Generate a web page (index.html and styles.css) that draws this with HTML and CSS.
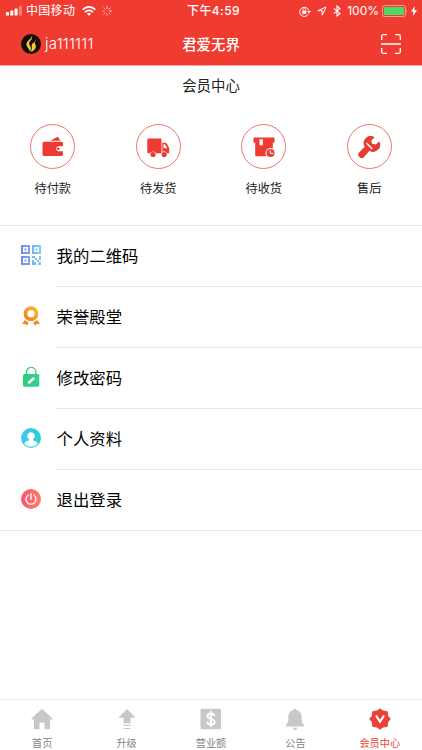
FILE: index.html
```
<!DOCTYPE html>
<html lang="zh-CN">

<head>
    <meta charset="UTF-8">
    <title>会员中心</title>
    <link rel="stylesheet" href="styles.css">
</head>

<body>
    <div class="top">
        <div class="status">
            <div class="status-left">
                <svg class="signal" width="17" height="10" viewBox="0 0 17 10" fill="#fff">
                    <rect x="0" y="6" width="3" height="3.5" rx=".6" />
                    <rect x="4.3" y="4.5" width="3" height="5" rx=".6" />
                    <rect x="8.6" y="2.5" width="3" height="7" rx=".6" />
                    <rect x="12.9" y="0" width="3" height="9.5" rx=".6" opacity=".35" />
                </svg>
                <span class="carrier">中国移动</span>
                <svg class="wifi" width="14" height="10" viewBox="0 0 14 10" fill="none" stroke="#fff" stroke-width="1.8">
                    <path d="M.7 3.6Q7-2 13.300 3.600M3 6.100Q7 2.700 11 6.100" />
                    <path d="M7 9.800L4.900 7.700Q7 6 9.100 7.700Z" fill="#fff" stroke="none" />
                </svg>
                <svg class="loading" width="10" height="10" viewBox="0 0 10 10" stroke="#fff" stroke-width=".9" stroke-linecap="round">
                    <path d="M5 .5v2M8.200 1.800L6.800 3.200M9.500 5h-2" opacity=".9" />
                    <path d="M8.200 8.200L6.800 6.800M5 9.500v-2M1.800 8.200l1.400-1.400M.5 5h2M1.800 1.800l1.400 1.400" opacity=".6" />
                </svg>
            </div>
            <div class="time">下午4:59</div>
            <div class="status-right">
                <svg width="12" height="11" viewBox="0 0 12 11" fill="none" stroke="#fff">
                    <path d="M9.300 8.300A4.600 4.600 0 1 1 9.800 4.500" />
                    <path d="M8 5h4L10 7.600Z" fill="#fff" stroke="none" />
                    <rect x="3.300" y="4.700" width="4" height="3.200" fill="#fff" stroke="none" />
                    <path d="M4 5V3.700a1.300 1.300 0 0 1 2.600 0V5" stroke-width=".8" />
                </svg>
                <svg class="locate" width="10" height="10" viewBox="0 0 10 10" fill="none" stroke="#fff">
                    <path d="M9 1L.8 4.700h4.400V9.200Z" stroke-linejoin="round" />
                </svg>
                <svg class="bluetooth" width="8" height="12" viewBox="0 0 8 12" fill="none" stroke="#fff" stroke-width="1.100">
                    <path d="M.8 3.300L7 8.500 4 11V1l3 2.500L.8 8.700" />
                </svg>
                <span class="percent">100%</span>
                <svg class="battery" width="26" height="12" viewBox="0 0 26 12">
                    <rect x=".5" y=".5" width="23" height="11" rx="2" fill="none" stroke="#fff" stroke-opacity=".5" />
                    <rect x="2" y="2" width="20" height="8" rx=".8" fill="#4cd964" />
                    <path d="M24.600 4q1.200 2 0 4Z" fill="#fff" opacity=".6" />
                </svg>
                <svg class="bolt" width="6" height="10" viewBox="0 0 6 10" fill="#fff">
                    <path d="M3.900 0L0 5.600h2.500L1.900 10 6 4.200H3.300Z" />
                </svg>
            </div>
        </div>
        <div class="header">
            <div class="user">
                <svg width="20" height="20" viewBox="0 0 20 20">
                    <circle cx="10" cy="10" r="10" fill="#150d08" />
                    <path d="M10.700 1.500C11.500 5 5.200 6.500 5.400 10.600c.1 2.800 3 3.700 3.200 7C12.500 13 7.200 11.800 8.300 8.700 9.300 6.200 12.200 4.800 10.700 1.500Z" fill="#f5c839" />
                    <path d="M14.700 5.500c.3 2.900-4.600 3.300-4 6.700.4 2-.2 4-1.300 5.900 3.400-1.200 5.500-3.200 5.500-5.700 0-2-1.500-2.500-1.200-3.800.3-1 1.800-1.600 1-3.100Z" fill="#f5c839" />
                </svg>
                <span>ja111111</span>
            </div>
            <div class="shop">君爱无界</div>
            <svg class="scan" width="20" height="20" viewBox="0 0 20 20" fill="none" stroke="#fff" stroke-width="1.300">
                <path d="M.7 6V2.200Q.7.7 2.200.7H6M14 .7h3.800q1.500 0 1.500 1.500V6M.7 14v3.800q0 1.500 1.500 1.500H6M14 19.300h3.800q1.500 0 1.500-1.500V14M0 10h20" />
            </svg>
        </div>
    </div>

    <h1 class="title">会员中心</h1>
    <div class="orders">
        <div class="order">
            <div class="circle">
                <svg width="22" height="22" viewBox="0 0 22 22" fill="#ee3a30">
                    <path d="M8.300 4.800L14.600 1.200q1.300-.6 2.300.7L18.300 4.800Z" />
                    <path d="M2 5.700h17.500q1.500 0 1.500 1.500v3h-4.200a2.500 2.500 0 0 0 0 5H21v3.100q0 1.600-1.600 1.600H2.100Q.5 19.900.5 18.300V7.200q0-1.500 1.500-1.500Z" />
                    <circle cx="16.300" cy="12.700" r="1.300" />
                </svg>
            </div>
            <span>待付款</span>
        </div>
        <div class="order">
            <div class="circle">
                <svg width="24" height="22" viewBox="0 0 24 22" fill="#ee3a30">
                    <path d="M2.500 2.500h11.800q1.200 0 1.200 1.200v13.500H10a3.400 3.400 0 0 0-6 0H2.500q-1.200 0-1.200-1.200V3.700q0-1.200 1.200-1.200Z" />
                    <path fill-rule="evenodd" d="M16.300 6.700h2.500q1.500 0 2.300 1.400l2.100 4.200v4.900H21a3.300 3.300 0 0 0-4.700-1.500ZM17.500 8.200v4h3.700l-1.700-3.300q-.4-.7-1.100-.7Z" />
                    <circle cx="7" cy="18.500" r="2.600" />
                    <circle cx="18.200" cy="18.500" r="2.600" />
                </svg>
            </div>
            <span>待发货</span>
        </div>
        <div class="order">
            <div class="circle">
                <svg width="22" height="22" viewBox="0 0 22 22" fill="#ee3a30">
                    <path d="M1.500 1.500h19q1 0 1 1v4h-1.700V19q0 1.300-1.300 1.300H3.500Q2.200 20.300 2.200 19V6.500H.5v-4q0-1 1-1Z" />
                    <path d="M6.500 3.300h3.400v6H6.500Z" fill="#fff" />
                    <circle cx="17.500" cy="17" r="5.100" fill="#fff" />
                    <circle cx="17.500" cy="17" r="4" />
                    <path d="M17.200 14.300V17.300h3" fill="none" stroke="#fff" />
                </svg>
            </div>
            <span>待收货</span>
        </div>
        <div class="order">
            <div class="circle">
                <svg width="24" height="24" viewBox="0 0 24 24">
                    <path d="M17.700 2.300A7 7 0 0 0 7.700 11.700L2.300 17.200a3.300 3.300 0 0 0 4.700 4.700l5.500-6.200a7 7 0 0 0 9.800-9.300L18.500 9.500 15 8.700l-.7-3.200Z" fill="#e43c31" />
                    <path d="M9.900 8.500L14.800 13.500" stroke="#fff" stroke-width="1.500" stroke-linecap="round" />
                </svg>
            </div>
            <span>售后</span>
        </div>
    </div>

    <ul class="menu">
        <li>
            <svg width="20" height="20" viewBox="0 0 20 20">
                <defs>
                    <linearGradient id="blue">
                        <stop offset="0" stop-color="#7787f2" />
                        <stop offset="1" stop-color="#7bd0fb" />
                    </linearGradient>
                </defs>
                <path fill="url(#blue)" fill-rule="evenodd" d="M0 0h9v9H0ZM2 2v5h5V2ZM3.500 3.500h2v2h-2ZM11 0h9v9h-9ZM13 2v5h5V2ZM14.500 3.500h2v2h-2ZM0 11h9v9H0ZM2 13v5h5v-5ZM3.500 14.500h2v2h-2ZM11 11h3v2h2v2h2v-4h2v4h-2v2h-2v-2h-2v-2h-3ZM11 15h2v2h2v3h-4ZM18 17h2v3h-3v-2h1Z" />
            </svg>
            <span>我的二维码</span>
        </li>
        <li>
            <svg width="20" height="20" viewBox="0 0 20 20">
                <defs>
                    <linearGradient id="gold" x1="1" y1="0" x2="0" y2="1">
                        <stop offset="0" stop-color="#ffb72b" />
                        <stop offset="1" stop-color="#ef8122" />
                    </linearGradient>
                </defs>
                <circle cx="10" cy="7.700" r="5.500" fill="none" stroke="url(#gold)" stroke-width="3.800" />
                <path d="M3.700 14L7.800 16.500 5.800 19.700 4.400 17.900 1 18.300ZM16.300 14L12.200 16.500 14.200 19.700 15.600 17.900 19 18.300Z" fill="#f18a29" />
            </svg>
            <span>荣誉殿堂</span>
        </li>
        <li>
            <svg width="20" height="20" viewBox="0 0 20 20">
                <defs>
                    <linearGradient id="green">
                        <stop offset="0" stop-color="#2acb79" />
                        <stop offset="1" stop-color="#35d39a" />
                    </linearGradient>
                </defs>
                <path d="M5.500 8V5.100a4.700 4.700 0 0 1 9.400 0V8" fill="none" stroke="#36ce8c" stroke-width="1.300" />
                <rect x="2" y="7" width="16.300" height="12.800" rx="1.500" fill="url(#green)" />
                <path d="M8 15.500L12.500 11.500" stroke="#fff" stroke-width="2.400" stroke-linecap="round" />
            </svg>
            <span>修改密码</span>
        </li>
        <li>
            <svg width="20" height="20" viewBox="0 0 20 20">
                <defs>
                    <linearGradient id="cyan">
                        <stop offset="0" stop-color="#46c3f2" />
                        <stop offset="1" stop-color="#1fd4d2" />
                    </linearGradient>
                </defs>
                <circle cx="10" cy="10" r="10" fill="url(#cyan)" />
                <path d="M10 4.300a3.700 3.700 0 0 1 2.100 6.800v1.300q4.500 1 4.500 3.500A9 9 0 0 1 3.400 15.900q0-2.500 4.500-3.500v-1.300A3.700 3.700 0 0 1 10 4.300Z" fill="#fff" />
            </svg>
            <span>个人资料</span>
        </li>
        <li>
            <svg width="20" height="20" viewBox="0 0 20 20">
                <defs>
                    <linearGradient id="pink">
                        <stop offset="0" stop-color="#f9537a" />
                        <stop offset="1" stop-color="#ff805b" />
                    </linearGradient>
                </defs>
                <circle cx="10" cy="10" r="10" fill="url(#pink)" />
                <path d="M7.300 6a5 5 0 1 0 5.400 0M10 4.700v5.500" fill="none" stroke="#fff" stroke-width="1.300" stroke-linecap="round" />
            </svg>
            <span>退出登录</span>
        </li>
    </ul>

    <div class="tabbar">
        <div class="tab">
            <svg width="22" height="22" viewBox="0 0 22 22" fill="#c8c8c8">
                <path d="M11 .8L21.500 10.600q.4.900-.6.900H19V20q0 1.200-1.200 1.200H13.500V14.500h-5v6.700H4.200Q3 21.200 3 20v-8.500H1.100q-1 0-.6-.9Z" />
            </svg>
            <span>首页</span>
        </div>
        <div class="tab">
            <svg width="22" height="22" viewBox="0 0 22 22" fill="#c8c8c8">
                <path d="M11 1l8 8q.3.800-.6.800H14.500v5.400h-7V9.800H3.600q-.9 0-.6-.8ZM7.500 16.700h7v1.200h-7ZM7.500 19.900h7v1.200h-7Z" />
            </svg>
            <span>升级</span>
        </div>
        <div class="tab">
            <svg width="22" height="22" viewBox="0 0 22 22">
                <rect x=".5" y=".7" width="20.500" height="20.500" rx="1.200" fill="#c8c8c8" />
                <path d="M14.500 8.200C14 4.500 7.500 4.700 7.500 8c0 3.500 7.200 2.200 7.200 6 0 3.500-7.200 3.500-7.400-.5M11 3.300V18.700" fill="none" stroke="#fff" stroke-width="2" />
            </svg>
            <span>营业额</span>
        </div>
        <div class="tab">
            <svg width="22" height="22" viewBox="0 0 22 22" fill="#c8c8c8">
                <path d="M9.700 2a1.300 1.300 0 0 1 2.600 0C16.200 2.700 17.600 5.500 17.600 9.500c0 4 .7 6 2.400 7.700v1.300H2v-1.300C3.700 15.500 4.400 13.500 4.400 9.500c0-4 1.400-6.800 5.300-7.500ZM8.800 19.800h4.400a2.200 2.200 0 0 1-4.400 0Z" />
            </svg>
            <span>公告</span>
        </div>
        <div class="tab active">
            <svg width="22" height="22" viewBox="0 0 22 22">
                <path d="M11 .7l2.800 2.200 4.300.7.600 4.300L21.300 11l-2.600 3.100-.6 4.300-4.300.7L11 21.300 8.200 19.100l-4.300-.7-.6-4.300L.7 11l2.600-3.100.6-4.300 4.300-.7Z" fill="#ea4035" stroke="#ea4035" stroke-linejoin="round" />
                <path d="M7 7.500l4 6.300L15 7.500" fill="none" stroke="#fff" stroke-width="2.200" />
            </svg>
            <span>会员中心</span>
        </div>
    </div>
</body>

</html>
```
FILE: styles.css
```
* {
    padding: 0;
    margin: 0;
    box-sizing: border-box;
}

body {
    height: 750px;
    display: flex;
    flex-direction: column;
    background-color: #fff;
    color: #222;
    font-family: Inter, "Noto Sans CJK SC", sans-serif;
    overflow: hidden;
}

svg {
    display: block;
    flex-shrink: 0;
}

/*顶部*/
.top {
    height: 66px;
    background-color: #ef3b30;
    border-bottom: 1px solid #f9aaa5;
    color: #fff;
}

.status {
    height: 22px;
    display: grid;
    grid-template-columns: 1fr auto 1fr;
    align-items: center;
    padding: 0 5px 0 6px;
    font-size: 12px;
    line-height: 22px;
}

.status-left,
.status-right {
    display: flex;
    align-items: center;
}

.status-right {
    justify-content: flex-end;
}

.carrier {
    margin-left: 3px;
    letter-spacing: 0.3px;
}

.wifi {
    margin-left: 7px;
}

.loading {
    margin-left: 6px;
}

.time {
    font-weight: 500;
    letter-spacing: 0.4px;
    margin-left: 4px;
}

.locate {
    margin-left: 6px;
}

.bluetooth {
    margin-left: 6px;
}

.percent {
    margin-left: 6px;
}

.battery {
    margin-left: 3px;
}

.bolt {
    margin-left: 3px;
}

.header {
    height: 43px;
    display: grid;
    grid-template-columns: 1fr auto 1fr;
    align-items: center;
    padding: 0 21px;
}

.user {
    display: flex;
    align-items: center;
    gap: 4px;
    font-size: 15px;
    font-weight: 300;
    letter-spacing: 0.25px;
}

.shop {
    font-size: 14.4px;
    font-weight: 500;
}

.scan {
    justify-self: end;
}

/*订单*/
.title {
    height: 40px;
    line-height: 40px;
    text-align: center;
    font-size: 14.4px;
    font-weight: 400;
}

.orders {
    height: 120px;
    padding-top: 18px;
    display: grid;
    grid-template-columns: repeat(4, 1fr);
    border-bottom: 1px solid #e9e9e9;
}

.order {
    display: flex;
    flex-direction: column;
    align-items: center;
    font-size: 12.2px;
    line-height: 18px;
}

.circle {
    width: 45px;
    height: 45px;
    margin-bottom: 11px;
    display: flex;
    align-items: center;
    justify-content: center;
    border: 1px solid #ec7770;
    border-radius: 50%;
}

/*菜单*/
.menu {
    list-style: none;
    border-bottom: 1px solid #e9e9e9;
}

.menu li {
    height: 61px;
    display: flex;
    align-items: center;
    padding-left: 21px;
    font-size: 16.4px;
    color: #000;
}

.menu svg {
    margin-right: 15px;
    margin-bottom: 3px;
}

.menu span {
    flex: 1;
    height: 61px;
    line-height: 61px;
    padding-left: 0.5px;
    border-bottom: 1px solid #e9e9e9;
}

.menu li:last-child,
.menu li:last-child span {
    height: 60px;
    border-bottom: none;
}

/*底部导航*/
.tabbar {
    height: 51px;
    margin-top: auto;
    display: grid;
    grid-template-columns: repeat(5, 1fr);
    border-top: 1px solid #ebebeb;
}

.tab {
    display: flex;
    flex-direction: column;
    align-items: center;
    padding-top: 8px;
    font-size: 10.2px;
    line-height: 15px;
    color: #858585;
}

.tab span {
    margin-top: 6px;
}

.tab.active {
    color: #ea4035;
}
```
